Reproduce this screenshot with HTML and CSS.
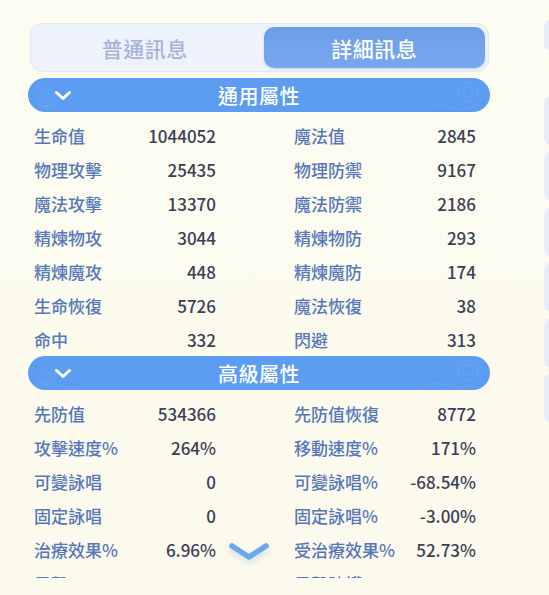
FILE: index.html
```html
<!DOCTYPE html>
<html lang="zh-Hant">
<head>
<meta charset="utf-8">
<link rel="stylesheet" href="styles.css">
</head>
<body>
<div class="page">
  <div class="main">
    <div class="tabs">
      <div class="tab">普通訊息</div>
      <div class="tab active">詳細訊息</div>
    </div>
    <div class="scroller">
      <div class="sec-head">
        <svg class="deco deco-l" width="80" height="34" viewBox="0 0 80 34"><g fill="none" stroke="#7fb2f5" stroke-width="1.2"><circle cx="18" cy="20" r="9"/><circle cx="18" cy="20" r="5"/><path d="M4 30 q14 -6 30 0 q10 4 22 0"/></g></svg>
        <svg class="chev" width="18" height="11" viewBox="0 0 18 11"><path d="M2.5 2.5 L9 8.5 L15.5 2.5" fill="none" stroke="#fff" stroke-width="3" stroke-linecap="round" stroke-linejoin="round"/></svg>
        <span class="sec-title">通用屬性</span>
        <svg class="deco deco-r" width="80" height="34" viewBox="0 0 80 34"><g fill="none" stroke="#7fb2f5" stroke-width="1.2"><circle cx="58" cy="14" r="10"/><circle cx="58" cy="14" r="5"/><path d="M10 32 q16 -8 32 -2 q12 4 26 -4"/></g></svg>
      </div>
      <div class="grid">
        <div class="cell"><span class="lbl">生命值</span><span class="val">1044052</span></div>
        <div class="cell"><span class="lbl">魔法值</span><span class="val">2845</span></div>
        <div class="cell"><span class="lbl">物理攻擊</span><span class="val">25435</span></div>
        <div class="cell"><span class="lbl">物理防禦</span><span class="val">9167</span></div>
        <div class="cell"><span class="lbl">魔法攻擊</span><span class="val">13370</span></div>
        <div class="cell"><span class="lbl">魔法防禦</span><span class="val">2186</span></div>
        <div class="cell"><span class="lbl">精煉物攻</span><span class="val">3044</span></div>
        <div class="cell"><span class="lbl">精煉物防</span><span class="val">293</span></div>
        <div class="cell"><span class="lbl">精煉魔攻</span><span class="val">448</span></div>
        <div class="cell"><span class="lbl">精煉魔防</span><span class="val">174</span></div>
        <div class="cell"><span class="lbl">生命恢復</span><span class="val">5726</span></div>
        <div class="cell"><span class="lbl">魔法恢復</span><span class="val">38</span></div>
        <div class="cell"><span class="lbl">命中</span><span class="val">332</span></div>
        <div class="cell"><span class="lbl">閃避</span><span class="val">313</span></div>
      </div>
      <div class="sec-head">
        <svg class="deco deco-l" width="80" height="34" viewBox="0 0 80 34"><g fill="none" stroke="#7fb2f5" stroke-width="1.2"><circle cx="18" cy="20" r="9"/><circle cx="18" cy="20" r="5"/><path d="M4 30 q14 -6 30 0 q10 4 22 0"/></g></svg>
        <svg class="chev" width="18" height="11" viewBox="0 0 18 11"><path d="M2.5 2.5 L9 8.5 L15.5 2.5" fill="none" stroke="#fff" stroke-width="3" stroke-linecap="round" stroke-linejoin="round"/></svg>
        <span class="sec-title">高級屬性</span>
        <svg class="deco deco-r" width="80" height="34" viewBox="0 0 80 34"><g fill="none" stroke="#7fb2f5" stroke-width="1.2"><circle cx="58" cy="14" r="10"/><circle cx="58" cy="14" r="5"/><path d="M10 32 q16 -8 32 -2 q12 4 26 -4"/></g></svg>
      </div>
      <div class="grid">
        <div class="cell"><span class="lbl">先防值</span><span class="val">534366</span></div>
        <div class="cell"><span class="lbl">先防值恢復</span><span class="val">8772</span></div>
        <div class="cell"><span class="lbl">攻擊速度%</span><span class="val">264%</span></div>
        <div class="cell"><span class="lbl">移動速度%</span><span class="val">171%</span></div>
        <div class="cell"><span class="lbl">可變詠唱</span><span class="val">0</span></div>
        <div class="cell"><span class="lbl">可變詠唱%</span><span class="val">-68.54%</span></div>
        <div class="cell"><span class="lbl">固定詠唱</span><span class="val">0</span></div>
        <div class="cell"><span class="lbl">固定詠唱%</span><span class="val">-3.00%</span></div>
        <div class="cell"><span class="lbl">治療效果%</span><span class="val">6.96%</span></div>
        <div class="cell"><span class="lbl">受治療效果%</span><span class="val">52.73%</span></div>
        <div class="cell"><span class="lbl">暴擊</span><span class="val">171</span></div>
        <div class="cell"><span class="lbl">暴擊防護</span><span class="val">63</span></div>
      </div>
      <svg class="more" width="44" height="24" viewBox="0 0 44 24"><path d="M5 5 L22 16 L39 5" fill="none" stroke="#6ca7ec" stroke-width="5.5" stroke-linecap="round" stroke-linejoin="round"/></svg>
    </div>
  </div>
  <div class="side">
    <div class="side-card first"></div>
    <div class="side-card"></div>
    <div class="side-card"></div>
    <div class="side-card"></div>
    <div class="side-card"></div>
    <div class="side-card"></div>
    <div class="side-card"></div>
  </div>
</div>
</body>
</html>
```
FILE: styles.css
```css
html, body {
  margin: 0;
  padding: 0;
  background: #fcfbef;
  font-family: "Noto Sans CJK TC", "Noto Sans", sans-serif;
  overflow: hidden;
}
.page {
  display: flex;
  width: 549px;
  height: 595px;
  overflow: hidden;
  background: linear-gradient(180deg, #fcfcf1 0%, #fcfaec 100%);
}
.main {
  margin-left: 28px;
  width: 462px;
  padding-top: 23px;
  flex-shrink: 0;
}
.tabs {
  margin: 0 1px 0 2px;
  height: 49px;
  box-sizing: border-box;
  background: #eef2fc;
  border: 1.5px solid #e1e7f6;
  border-radius: 12px;
  padding: 3px;
  display: flex;
}
.tab {
  flex: 1;
  display: flex;
  align-items: center;
  justify-content: center;
  font-size: 21px;
  font-weight: 500;
  color: #a6b4d7;
  border-radius: 10px;
  letter-spacing: 0.5px;
}
.tab.active {
  margin-left: 8px;
  background: linear-gradient(180deg, #6c9ee7 0%, #77a8ef 100%);
  color: #ffffff;
  box-shadow: 0 1px 2px rgba(90, 130, 200, 0.25);
}
.scroller {
  position: relative;
  margin-top: 6px;
  height: 500px;
  overflow: hidden;
}
.sec-head {
  position: relative;
  height: 34px;
  border-radius: 17px;
  background: #5c9df2;
  display: flex;
  align-items: center;
  justify-content: center;
  overflow: hidden;
}
.sec-title {
  color: #ffffff;
  font-size: 20px;
  font-weight: 500;
  letter-spacing: 0.5px;
  position: relative;
}
.chev {
  position: absolute;
  left: 26px;
  top: 12px;
}
.deco {
  position: absolute;
  top: 0;
  opacity: 0.3;
}
.deco-l { left: 0; }
.deco-r { right: 0; }
.grid {
  display: grid;
  grid-template-columns: 182px 182px;
  column-gap: 78px;
  grid-auto-rows: 34px;
  padding: 6px 14px 0 6px;
}
.cell {
  display: flex;
  align-items: center;
  justify-content: space-between;
  font-size: 17px;
  font-weight: 500;
  white-space: nowrap;
}
.lbl { color: #5777bb; }
.val { color: #3c3f57; }
.more {
  position: absolute;
  left: 199px;
  top: 463px;
  filter: drop-shadow(0 3px 3px rgba(108, 167, 236, 0.35));
}
.side {
  margin-left: 54px;
  flex-shrink: 0;
  width: 30px;
  display: flex;
  flex-direction: column;
  gap: 7.5px;
}
.side-card {
  height: 48px;
  background: #e9edf7;
  border-radius: 6px 0 0 6px;
}
.side-card.first {
  margin-top: 20px;
  height: 30px;
  margin-bottom: 39px;
}
```
